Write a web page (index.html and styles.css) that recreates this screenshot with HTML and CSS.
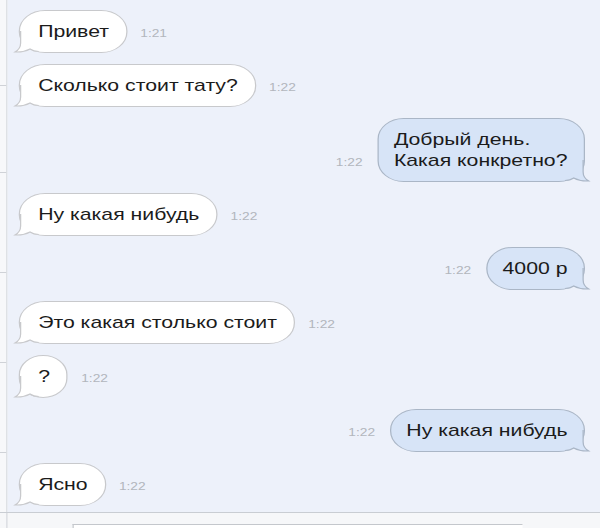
FILE: index.html
```html
<!DOCTYPE html>
<html lang="ru">
<head>
<meta charset="utf-8">
<link rel="stylesheet" href="styles.css">
</head>
<body>
<div class="screen">
  <div class="main">
    <div class="strip">
      <div class="tick t1"></div>
      <div class="tick t2"></div>
      <div class="tick t3"></div>
      <div class="tick t4"></div>
      <div class="tick t5"></div>
    </div>
    <div class="chat">
      <div class="row in">
        <div class="bubble">Привет<svg class="tail" viewBox="0 0 20 22" width="20" height="22"><path class="tf" d="M5.5 0 V12 C5.5 16 4 19 1 21 C6 21.4 10 20 13 18 C15 19.7 17.5 20.5 20 20.5 Z"/><path class="ts" d="M5.5 0 V12 C5.5 16 4 19 1 21 C6 21.4 10 20 13 18 C15 19.7 17.5 20.5 20 20.5"/></svg></div>
        <span class="time">1:21</span>
      </div>
      <div class="row in">
        <div class="bubble">Сколько стоит тату?<svg class="tail" viewBox="0 0 20 22" width="20" height="22"><path class="tf" d="M5.5 0 V12 C5.5 16 4 19 1 21 C6 21.4 10 20 13 18 C15 19.7 17.5 20.5 20 20.5 Z"/><path class="ts" d="M5.5 0 V12 C5.5 16 4 19 1 21 C6 21.4 10 20 13 18 C15 19.7 17.5 20.5 20 20.5"/></svg></div>
        <span class="time">1:22</span>
      </div>
      <div class="row out">
        <span class="time">1:22</span>
        <div class="bubble">Добрый день.<br>Какая конкретно?<svg class="tail" viewBox="0 0 20 22" width="20" height="22"><path class="tf" d="M5.5 0 V12 C5.5 16 4 19 1 21 C6 21.4 10 20 13 18 C15 19.7 17.5 20.5 20 20.5 Z"/><path class="ts" d="M5.5 0 V12 C5.5 16 4 19 1 21 C6 21.4 10 20 13 18 C15 19.7 17.5 20.5 20 20.5"/></svg></div>
      </div>
      <div class="row in">
        <div class="bubble">Ну какая нибудь<svg class="tail" viewBox="0 0 20 22" width="20" height="22"><path class="tf" d="M5.5 0 V12 C5.5 16 4 19 1 21 C6 21.4 10 20 13 18 C15 19.7 17.5 20.5 20 20.5 Z"/><path class="ts" d="M5.5 0 V12 C5.5 16 4 19 1 21 C6 21.4 10 20 13 18 C15 19.7 17.5 20.5 20 20.5"/></svg></div>
        <span class="time">1:22</span>
      </div>
      <div class="row out">
        <span class="time">1:22</span>
        <div class="bubble">4000 р<svg class="tail" viewBox="0 0 20 22" width="20" height="22"><path class="tf" d="M5.5 0 V12 C5.5 16 4 19 1 21 C6 21.4 10 20 13 18 C15 19.7 17.5 20.5 20 20.5 Z"/><path class="ts" d="M5.5 0 V12 C5.5 16 4 19 1 21 C6 21.4 10 20 13 18 C15 19.7 17.5 20.5 20 20.5"/></svg></div>
      </div>
      <div class="row in">
        <div class="bubble">Это какая столько стоит<svg class="tail" viewBox="0 0 20 22" width="20" height="22"><path class="tf" d="M5.5 0 V12 C5.5 16 4 19 1 21 C6 21.4 10 20 13 18 C15 19.7 17.5 20.5 20 20.5 Z"/><path class="ts" d="M5.5 0 V12 C5.5 16 4 19 1 21 C6 21.4 10 20 13 18 C15 19.7 17.5 20.5 20 20.5"/></svg></div>
        <span class="time">1:22</span>
      </div>
      <div class="row in">
        <div class="bubble">?<svg class="tail" viewBox="0 0 20 22" width="20" height="22"><path class="tf" d="M5.5 0 V12 C5.5 16 4 19 1 21 C6 21.4 10 20 13 18 C15 19.7 17.5 20.5 20 20.5 Z"/><path class="ts" d="M5.5 0 V12 C5.5 16 4 19 1 21 C6 21.4 10 20 13 18 C15 19.7 17.5 20.5 20 20.5"/></svg></div>
        <span class="time">1:22</span>
      </div>
      <div class="row out">
        <span class="time">1:22</span>
        <div class="bubble">Ну какая нибудь<svg class="tail" viewBox="0 0 20 22" width="20" height="22"><path class="tf" d="M5.5 0 V12 C5.5 16 4 19 1 21 C6 21.4 10 20 13 18 C15 19.7 17.5 20.5 20 20.5 Z"/><path class="ts" d="M5.5 0 V12 C5.5 16 4 19 1 21 C6 21.4 10 20 13 18 C15 19.7 17.5 20.5 20 20.5"/></svg></div>
      </div>
      <div class="row in">
        <div class="bubble">Ясно<svg class="tail" viewBox="0 0 20 22" width="20" height="22"><path class="tf" d="M5.5 0 V12 C5.5 16 4 19 1 21 C6 21.4 10 20 13 18 C15 19.7 17.5 20.5 20 20.5 Z"/><path class="ts" d="M5.5 0 V12 C5.5 16 4 19 1 21 C6 21.4 10 20 13 18 C15 19.7 17.5 20.5 20 20.5"/></svg></div>
        <span class="time">1:22</span>
      </div>
    </div>
  </div>
  <div class="footer">
    <div class="fstrip"></div>
    <div class="input"></div>
  </div>
</div>
</body>
</html>
```

FILE: styles.css
```css
* { box-sizing: border-box; }
html, body { margin: 0; padding: 0; }
body {
  width: 600px;
  height: 528px;
  overflow: hidden;
  font-family: "Liberation Sans", Arial, sans-serif;
  background: #f6f7f9;
}
/* the screenshot is stretched horizontally by 1.25 */
.screen {
  display: flex;
  flex-direction: column;
  width: 480px;
  height: 528px;
  transform: scaleX(1.25);
  transform-origin: 0 0;
}
.main {
  display: flex;
  height: 513px;
  border-bottom: 1px solid #c9cdd3;
}
.strip {
  width: 6px;
  flex: none;
  background: #f7f8fa;
  border-right: 1px solid #d6d9de;
  display: flex;
  flex-direction: column;
}
.tick {
  width: 5px;
  height: 1px;
  background: #cfd2d7;
}
.t1 { margin-top: 85px; }
.t2 { margin-top: 86px; }
.t3 { margin-top: 99px; }
.t4 { margin-top: 89px; }
.t5 { margin-top: 89px; }
.chat {
  flex: 1;
  background: #edf1fa;
  padding: 10px 12px 0 8.5px;
  display: flex;
  flex-direction: column;
  gap: 11px;
}
.row {
  display: flex;
  align-items: last baseline;
}
.row.out { justify-content: flex-end; }
.bubble {
  position: relative;
  font-size: 17px;
  line-height: 21px;
  color: #1b1b1b;
  padding: 10px 13.5px 10px 15px;
  border-radius: 21px;
  background: #ffffff;
  border: 1px solid #c8c9cc;
}
.out .bubble {
  background: #d7e4f7;
  border-color: #aab6c6;
  padding: 10px 13px 10px 12px;
}
.tail {
  position: absolute;
  left: -5px;
  bottom: -1px;
  overflow: visible;
}
.out .tail {
  left: auto;
  right: -5px;
  transform: scaleX(-1);
}
.tf { fill: #ffffff; }
.ts { fill: none; stroke: #c8c9cc; stroke-width: 1; }
.out .tf { fill: #d7e4f7; }
.out .ts { stroke: #aab6c6; }
.time {
  font-size: 11px;
  color: #b2b6bd;
}
.in .time { margin-left: 10.5px; }
.out .time { margin-right: 12px; }
.footer {
  flex: 1;
  display: flex;
  background: #f6f7f9;
}
.fstrip {
  width: 6px;
  border-right: 1px solid #d6d9de;
}
.input {
  margin-top: 11px;
  margin-left: 52px;
  width: 360px;
  border-top: 1px solid #c4c7cc;
  border-left: 1px solid #c4c7cc;
  background: #ffffff;
}
```
